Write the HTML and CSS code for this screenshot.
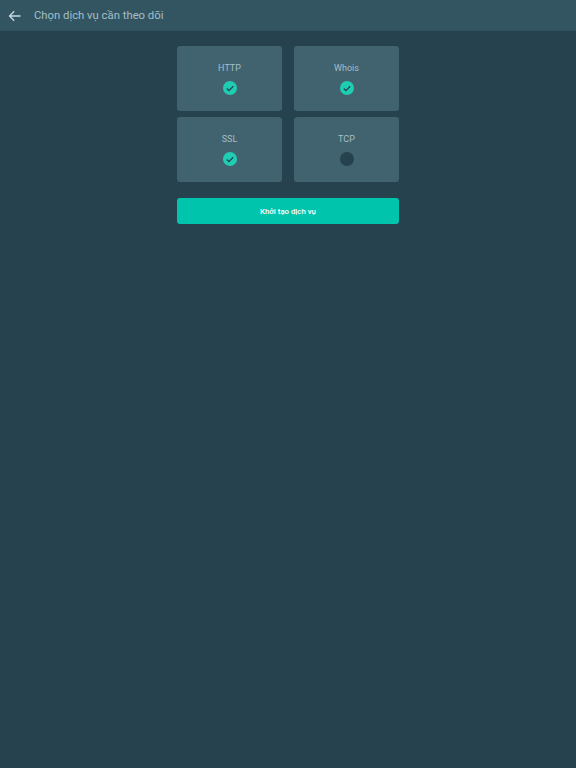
FILE: index.html
```html
<!DOCTYPE html>
<html lang="vi">
<head>
    <meta charset="UTF-8">
    <meta name="viewport" content="width=device-width, initial-scale=1.0">
    <title>Chọn dịch vụ cần theo dõi</title>
    <link rel="stylesheet" href="styles.css">
</head>
<body>
    <div class="app-header">
        <svg class="back-icon" width="13" height="12" viewBox="0 0 13 12">
            <path d="M12.5 6H1.5M6.2 1.2L1.5 6l4.7 4.8" fill="none" stroke="#c5dae0" stroke-width="1.3"/>
        </svg>
        <h1>Chọn dịch vụ cần theo dõi</h1>
    </div>

    <div class="content">
        <div class="service-grid">
            <div class="service-card">
                <span class="service-name">HTTP</span>
                <span class="check on">
                    <svg width="8" height="7" viewBox="0 0 10 8"><path d="M1 4l2.7 2.7L9 1.2" fill="none" stroke="#234350" stroke-width="1.6"/></svg>
                </span>
            </div>
            <div class="service-card">
                <span class="service-name">Whois</span>
                <span class="check on">
                    <svg width="8" height="7" viewBox="0 0 10 8"><path d="M1 4l2.7 2.7L9 1.2" fill="none" stroke="#234350" stroke-width="1.6"/></svg>
                </span>
            </div>
            <div class="service-card">
                <span class="service-name">SSL</span>
                <span class="check on">
                    <svg width="8" height="7" viewBox="0 0 10 8"><path d="M1 4l2.7 2.7L9 1.2" fill="none" stroke="#234350" stroke-width="1.6"/></svg>
                </span>
            </div>
            <div class="service-card">
                <span class="service-name">TCP</span>
                <span class="check"></span>
            </div>
        </div>
        <button class="submit-btn">Khởi tạo dịch vụ</button>
    </div>
</body>
</html>
```

FILE: styles.css
```css
* {
    margin: 0;
    padding: 0;
    box-sizing: border-box;
}

body {
    font-family: Roboto, 'Liberation Sans', sans-serif;
    background: #25424e;
    height: 768px;
    overflow: hidden;
}

.app-header {
    height: 31px;
    background: #335562;
    border-bottom: 1px solid #2f505c;
    display: flex;
    align-items: center;
    padding: 1px 0 0 8px;
}

.back-icon {
    margin-right: 13px;
}

.app-header h1 {
    font-size: 11.3px;
    font-weight: 400;
    color: #a3bfc8;
}

.content {
    width: 222px;
    margin: 15px auto 0;
}

.service-grid {
    display: grid;
    grid-template-columns: 105px 105px;
    justify-content: space-between;
    grid-auto-rows: 65px;
    row-gap: 6px;
}

.service-card {
    background: #41626f;
    border-radius: 3px;
    display: flex;
    flex-direction: column;
    align-items: center;
    padding-top: 15.5px;
}

.service-name {
    font-size: 9px;
    line-height: 12px;
    color: #a3bfc8;
}

.check {
    width: 14px;
    height: 14px;
    margin-top: 7.5px;
    border-radius: 50%;
    background: #25424e;
    display: flex;
    align-items: center;
    justify-content: center;
}

.check.on {
    background: #1fcdb2;
}

.submit-btn {
    display: block;
    width: 100%;
    height: 26px;
    margin-top: 16px;
    background: #00c4ab;
    border: none;
    border-radius: 3px;
    color: white;
    font-family: inherit;
    font-size: 7.8px;
    font-weight: 500;
    cursor: pointer;
}
```
